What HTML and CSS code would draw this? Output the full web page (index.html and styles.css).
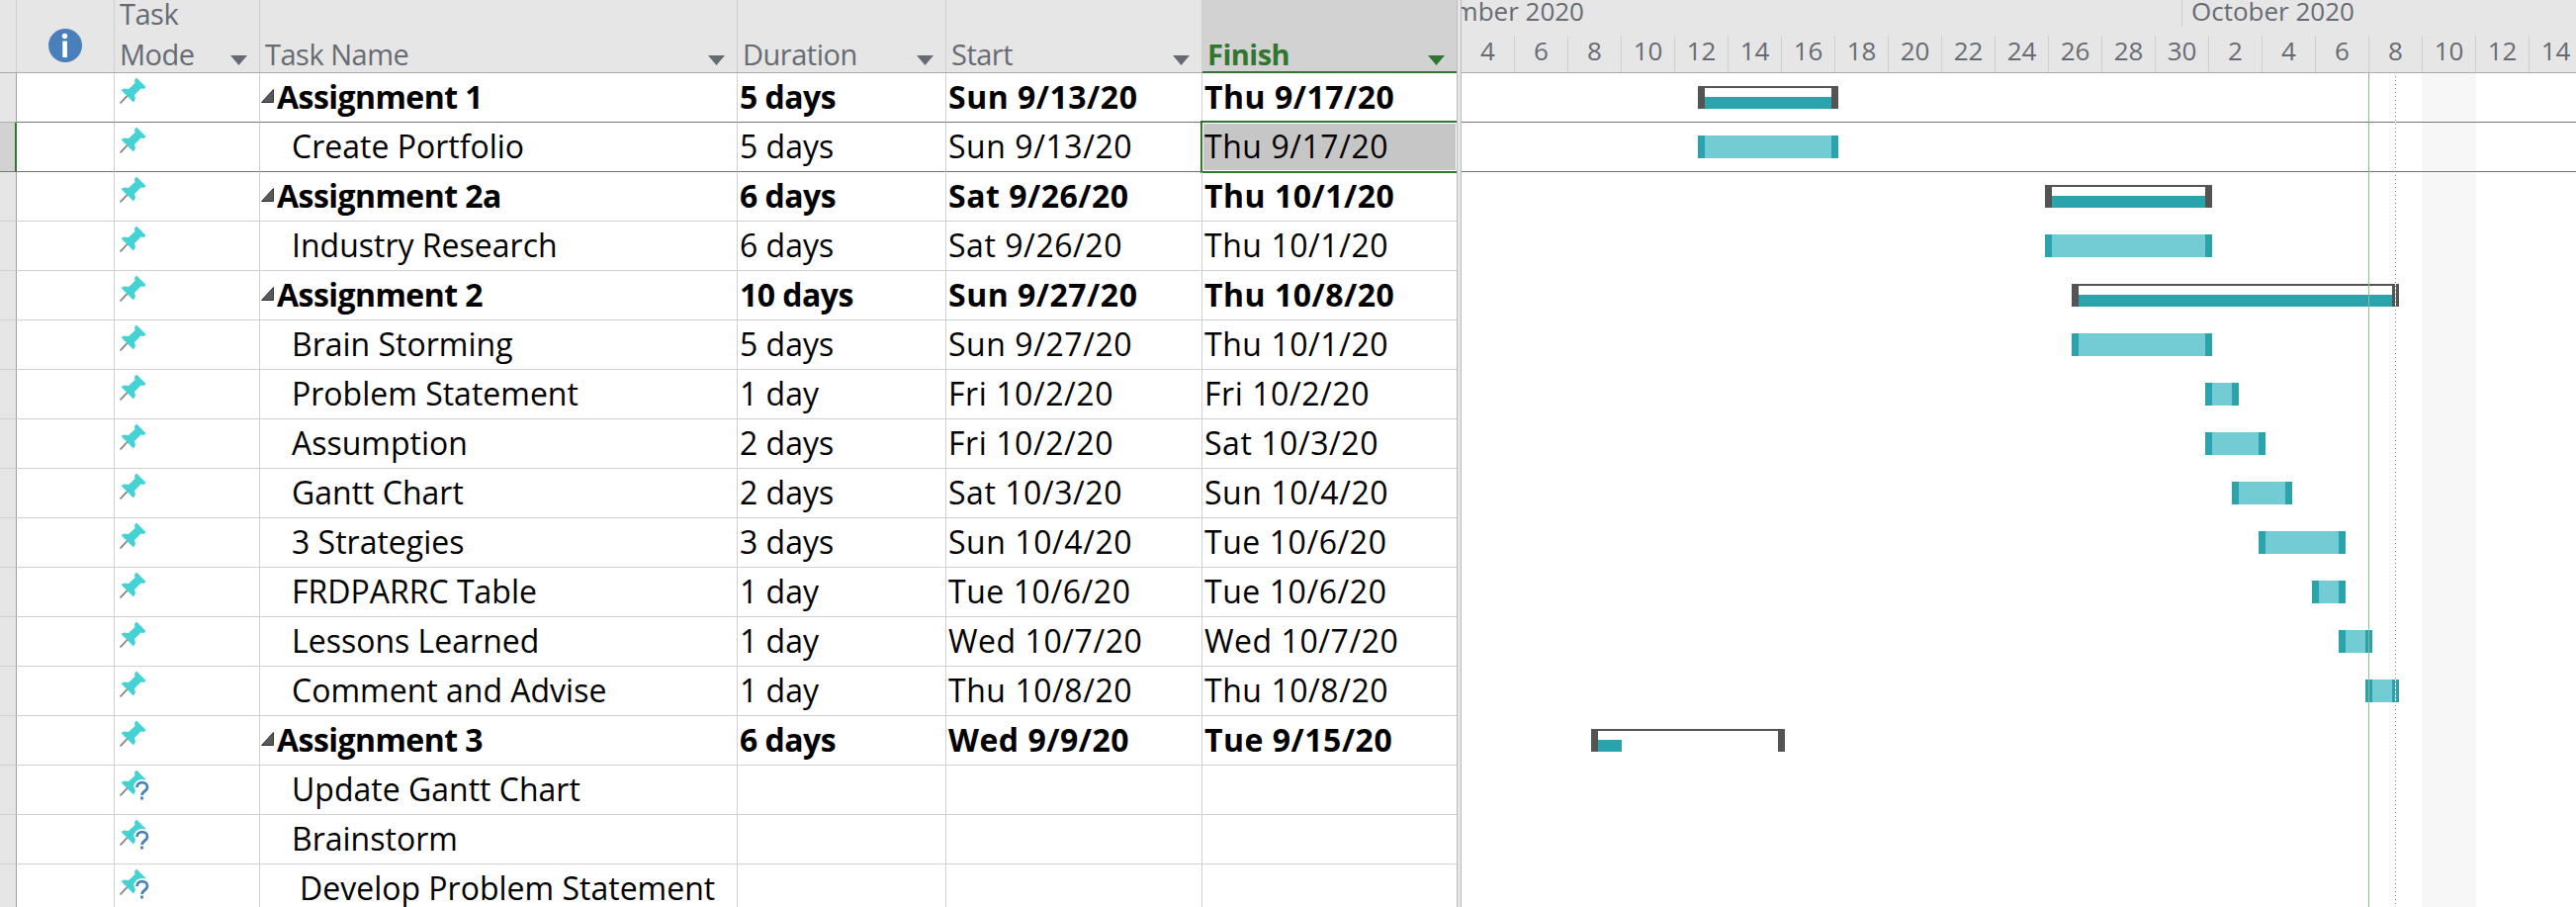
FILE: index.html
```html
<!DOCTYPE html>
<html lang="en">
<head>
<meta charset="utf-8">
<title>Project schedule</title>
<link rel="stylesheet" href="styles.css">
</head>
<body>
<svg class="defs" aria-hidden="true">
  <symbol id="pin" viewBox="0 0 30 28">
    <path d="M.5 26.500 9 17.500" stroke="#7f7f7f" stroke-width="1.800" fill="none"/>
    <path d="M17 .5 26.500 10 24.500 12 21.500 11.500 15 18 16 22 14 25.500 1.500 13 4.500 11.500 9 12 15.500 6 15 3Z" fill="#45d2d4"/>
  </symbol>
</svg>
<main class="app">
  <section class="table">
    <header class="head">
      <div class="gutter"></div>
      <div class="cell info"><svg width="34" height="34" viewBox="0 0 34 34"><circle cx="17" cy="17" r="17" fill="#4a80ba"/><circle cx="16.500" cy="7.500" r="2.700" fill="#fff"/><path d="M14.300 12.500h4.600V29h-4.600z" fill="#fff"/></svg></div>
      <div class="cell"><span>Task<br>Mode</span><i class="arrow"></i></div>
      <div class="cell"><span>Task Name</span><i class="arrow"></i></div>
      <div class="cell"><span>Duration</span><i class="arrow"></i></div>
      <div class="cell"><span>Start</span><i class="arrow"></i></div>
      <div class="cell active"><span>Finish</span><i class="arrow"></i></div>
    </header>
    <div id="rows"></div>
  </section>
  <div class="splitter"></div>
  <section class="chart">
    <header class="scale">
      <div class="months"><div class="month first"><span>September 2020</span></div><div class="month">October 2020</div></div>
      <div class="days" id="days"></div>
    </header>
    <div class="plot">
      <div class="weekend"></div>
      <div id="lanes"></div>
      <div class="today"></div>
      <div class="status"></div>
    </div>
  </section>
</main>
<script src="app.js"></script>
</body>
</html>
```
FILE: styles.css
```css
* { box-sizing: border-box; }
body { margin: 0; background: #fff; overflow: hidden; font-family: "Open Sans", "Noto Sans", sans-serif; color: #000; }
.defs { position: absolute; width: 0; height: 0; }
.app { display: flex; width: 2605px; height: 917px; overflow: hidden; }
.table { width: 1473px; flex: none; }
.head, .row { display: grid; grid-template-columns: 17px 99px 147px 483px 211px 259px 257px; }
.head { height: 74px; background: #e6e6e6; border-bottom: 1px solid #ababab; color: #666b73; font-size: 29px; line-height: 41px; letter-spacing: -.5px; }
.head .cell { display: flex; justify-content: space-between; align-items: flex-end; border-right: 1px solid #cfcfcf; padding: 0 12px 0 5px; white-space: nowrap; height: 73px; }
.head .cell span { margin-bottom: -2px; }
.head .gutter { border-right: 1px solid #cfcfcf; height: 73px; }
.head .info { justify-content: center; padding: 0 0 10px; }
.arrow { width: 17px; height: 10px; margin-bottom: 7px; background: #666b73; clip-path: polygon(0 0, 100% 0, 50% 100%); }
.head .active { background: #d2d2d2; color: #31752f; font-weight: 700; height: 74px; border-right: 0; border-bottom: 2px solid #31752f; }
.head .active span { margin-bottom: -3px; }
.active .arrow { background: #31752f; margin-bottom: 6px; }
.row { height: 50px; font-size: 32px; line-height: 47px; white-space: pre; }
.row > div { border-right: 1px solid #d0d0d0; border-bottom: 1px solid #d0d0d0; padding-left: 2px; }
.row > .gutter { background: #e6e6e6; border-right-color: #a0a0a0; }
.row > div:last-child { border-right: 0; }
.row .mode { padding: 4px 0 0 5px; display: flex; align-items: flex-start; }
.row .name { padding-left: 32px; display: flex; }
.row .deep { padding-left: 40px; }
.date { letter-spacing: .55px; }
.summary { font-weight: 700; letter-spacing: -.55px; }
.summary .date { letter-spacing: .5px; }
.summary .name { padding-left: 1px; }
.twist { width: 13px; height: 14px; margin: 16px 3px 0 0; flex: none; }
.before > div, .picked > div { border-bottom-color: #747474; }
.before > .gutter { border-bottom-color: #b0b0b0; }
.picked > .gutter { background: #d2d2d2; border-right: 2px solid #31752f; }
.row.picked > .finish { background: #c6c6c6; outline: 2px solid #31752f; border: 1px solid #fff; line-height: 45px; padding-left: 1px; margin-bottom: 1px; }
.splitter { position: relative; width: 5px; flex: none; background: #e6e6e6; border: 1px solid #bcbcbc; border-width: 0 1px; }
.chart { width: 1127px; flex: none; overflow: hidden; }
.scale { height: 74px; background: #e6e6e6; border-bottom: 1px solid #ababab; color: #666b73; font-size: 26px; }
.months { display: flex; height: 36px; line-height: 23px; }
.month { height: 27px; padding-left: 9px; white-space: nowrap; }
.month.first { width: 729px; border-right: 1px solid #cfcfcf; padding: 0; overflow: hidden; }
.month.first span { display: block; width: 124px; direction: rtl; }
.days { display: flex; height: 37px; line-height: 31px; }
.days span { width: 54px; flex: none; border-right: 1px solid #cfcfcf; text-align: center; }
.plot { position: relative; height: 843px; }
.lane { height: 50px; padding-top: 13px; }
.lane.before, .lane.picked { border-bottom: 1px solid #747474; }
.bar { height: 23px; background: #73ccd4; border: solid #2aa3ac; border-width: 0 7px; }
.bar.group { background: none; border: solid #545454; border-width: 2px 7px 0; padding-top: 9px; }
.bar.group i { display: block; height: 12px; background: #2aa3ac; }
.weekend { position: absolute; left: 971px; top: 0; width: 55px; height: 100%; background: #f7f7f7; }
#lanes { position: relative; }
.today { position: absolute; left: 917px; top: 0; width: 1px; height: 100%; background: #8abf8a; }
.status { position: absolute; left: 944px; top: 3px; width: 1px; height: 100%; background: repeating-linear-gradient(#858585 0 1px, #fff 1px 4px); }
```
FILE: app.js
```js
// Bars use day numbers counted from 1 September 2020.
const DAY = 27;
const tasks = [
  { name: 'Assignment 1', dur: '5 days', start: 'Sun 9/13/20', finish: 'Thu 9/17/20', from: 13, to: 17, group: true, state: 'before' },
  { name: 'Create Portfolio', dur: '5 days', start: 'Sun 9/13/20', finish: 'Thu 9/17/20', from: 13, to: 17, state: 'picked' },
  { name: 'Assignment 2a', dur: '6 days', start: 'Sat 9/26/20', finish: 'Thu 10/1/20', from: 26, to: 31, group: true },
  { name: 'Industry Research', dur: '6 days', start: 'Sat 9/26/20', finish: 'Thu 10/1/20', from: 26, to: 31 },
  { name: 'Assignment 2', dur: '10 days', start: 'Sun 9/27/20', finish: 'Thu 10/8/20', from: 27, to: 38, group: true },
  { name: 'Brain Storming', dur: '5 days', start: 'Sun 9/27/20', finish: 'Thu 10/1/20', from: 27, to: 31 },
  { name: 'Problem Statement', dur: '1 day', start: 'Fri 10/2/20', finish: 'Fri 10/2/20', from: 32, to: 32 },
  { name: 'Assumption', dur: '2 days', start: 'Fri 10/2/20', finish: 'Sat 10/3/20', from: 32, to: 33 },
  { name: 'Gantt Chart', dur: '2 days', start: 'Sat 10/3/20', finish: 'Sun 10/4/20', from: 33, to: 34 },
  { name: '3 Strategies', dur: '3 days', start: 'Sun 10/4/20', finish: 'Tue 10/6/20', from: 34, to: 36 },
  { name: 'FRDPARRC Table', dur: '1 day', start: 'Tue 10/6/20', finish: 'Tue 10/6/20', from: 36, to: 36 },
  { name: 'Lessons Learned', dur: '1 day', start: 'Wed 10/7/20', finish: 'Wed 10/7/20', from: 37, to: 37 },
  { name: 'Comment and Advise', dur: '1 day', start: 'Thu 10/8/20', finish: 'Thu 10/8/20', from: 38, to: 38 },
  { name: 'Assignment 3', dur: '6 days', start: 'Wed 9/9/20', finish: 'Tue 9/15/20', from: 9, to: 15, group: true, done: 24 },
  { name: 'Update Gantt Chart', open: true },
  { name: 'Brainstorm', open: true },
  { name: 'Develop Problem Statement', open: true, deep: true }
];
const pin = '<svg width="30" height="28"><use href="#pin"/></svg>';
const pinOpen = '<svg width="34" height="32"><use href="#pin" width="30" height="28"/><g fill="none"><path d="M17 18c0-7 11-7 11 0 0 4.500-5.500 4-5.500 8.500M22.500 26v4" stroke="#fff" stroke-width="5.500"/><path d="M17.500 18c0-6.500 10.500-6.500 10.500 0 0 4-5.500 4-5.500 8M22.500 27.500v3" stroke="#4a80ba" stroke-width="2.800"/></g></svg>';
const twist = '<svg class="twist" viewBox="0 0 13 14"><path d="M12.500.5v13H.5z" fill="#595959" stroke="#333"/></svg>';

document.getElementById('rows').innerHTML = tasks.map(t => `
  <div class="row ${t.group ? 'summary' : ''} ${t.state || ''}">
    <div class="gutter"></div><div></div>
    <div class="mode">${t.open ? pinOpen : pin}</div>
    <div class="name ${t.deep ? 'deep' : ''}">${t.group ? twist : ''}<span>${t.name}</span></div>
    <div><span>${t.dur || ''}</span></div><div class="date"><span>${t.start || ''}</span></div><div class="date finish"><span>${t.finish || ''}</span></div>
  </div>`.replace(/>\s+</g, '><')).join('');

document.getElementById('lanes').innerHTML = tasks.map(t => {
  if (!t.from) return '<div class="lane"></div>';
  const left = (t.from - 4) * DAY - 4;
  const width = (t.to - t.from + 1) * DAY + 7;
  const fill = t.group ? `<i style="width:${t.done ? t.done + 'px' : '100%'}"></i>` : '';
  return `<div class="lane ${t.state || ''}"><div class="bar ${t.group ? 'group' : ''}" style="margin-left:${left}px;width:${width}px">${fill}</div></div>`;
}).join('');

const labels = [];
for (let d = 4; d <= 44; d += 2) labels.push(d > 30 ? d - 30 : d);
document.getElementById('days').innerHTML = labels.map(d => `<span>${d}</span>`).join('');
```
